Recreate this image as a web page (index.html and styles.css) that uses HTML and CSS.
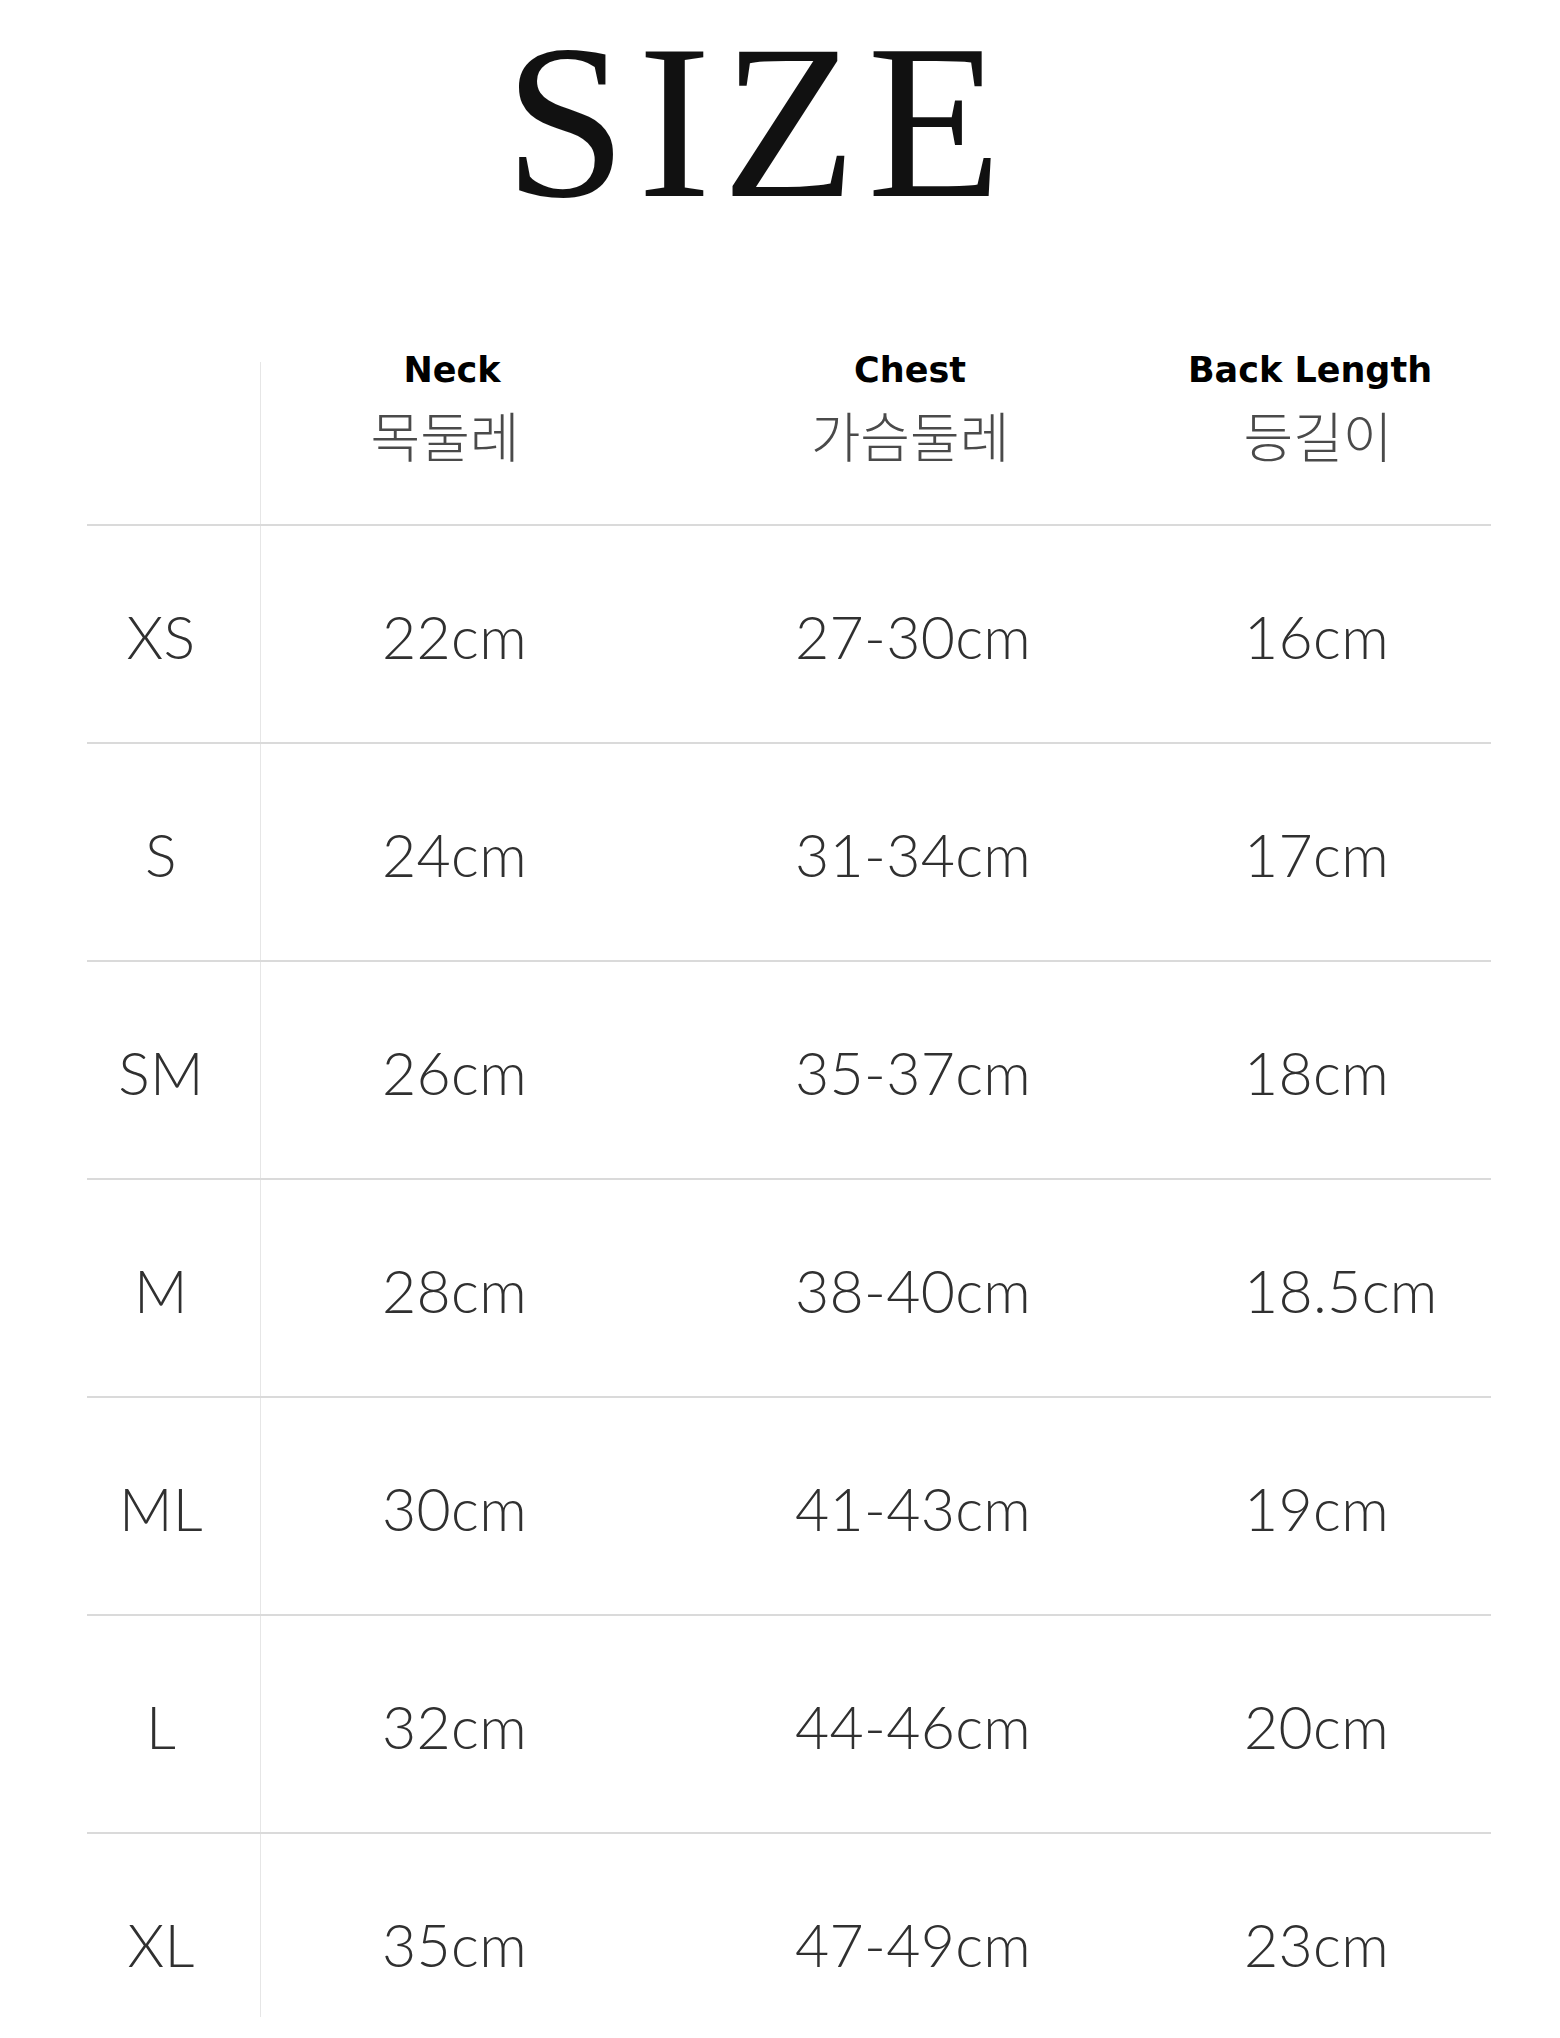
FILE: index.html
```html
<!DOCTYPE html>
<html lang="ko">
<head>
<meta charset="utf-8">
<title>SIZE</title>
<link rel="stylesheet" href="styles.css">
</head>
<body>
<div class="page">
  <h1 class="title">SIZE</h1>
  <div class="chart">
    <div class="row head">
      <div class="cell label"></div>
      <div class="cell"><span class="en">Neck</span><span class="ko ko-neck">목둘레</span></div>
      <div class="cell"><span class="en">Chest</span><span class="ko">가슴둘레</span></div>
      <div class="cell last"><span class="en">Back Length</span><span class="ko ko-back">등길이</span></div>
    </div>
    <div class="row">
      <div class="cell label">XS</div><div class="cell neck">22cm</div><div class="cell chest">27-30cm</div><div class="cell back">16cm</div>
    </div>
    <div class="row">
      <div class="cell label">S</div><div class="cell neck">24cm</div><div class="cell chest">31-34cm</div><div class="cell back">17cm</div>
    </div>
    <div class="row">
      <div class="cell label">SM</div><div class="cell neck">26cm</div><div class="cell chest">35-37cm</div><div class="cell back">18cm</div>
    </div>
    <div class="row">
      <div class="cell label">M</div><div class="cell neck">28cm</div><div class="cell chest">38-40cm</div><div class="cell back">18.5cm</div>
    </div>
    <div class="row">
      <div class="cell label">ML</div><div class="cell neck">30cm</div><div class="cell chest">41-43cm</div><div class="cell back">19cm</div>
    </div>
    <div class="row">
      <div class="cell label">L</div><div class="cell neck">32cm</div><div class="cell chest">44-46cm</div><div class="cell back">20cm</div>
    </div>
    <div class="row final">
      <div class="cell label">XL</div><div class="cell neck">35cm</div><div class="cell chest">47-49cm</div><div class="cell back">23cm</div>
    </div>
  </div>
</div>
</body>
</html>
```

FILE: styles.css
```css
html, body {
  margin: 0;
  padding: 0;
  background: #ffffff;
}

.page {
  width: 1560px;
  height: 2038px;
  overflow: hidden;
}

.title {
  margin: 0;
  padding-right: 43px;
  font-family: "Liberation Serif", "Times New Roman", serif;
  font-weight: 400;
  font-size: 220px;
  line-height: 244px;
  letter-spacing: 11px;
  text-align: center;
  color: #111111;
}

.chart {
  margin: 101px 69px 0 87px;
}

.row {
  display: grid;
  grid-template-columns: 174px 382px 534px 314px;
  height: 218px;
  box-sizing: border-box;
  border-top: 2px solid #dadada;
}

.cell {
  display: flex;
  align-items: center;
  justify-content: center;
  padding-top: 4px;
  font-family: Lato, "Noto Sans", sans-serif;
  font-weight: 300;
  font-size: 59px;
  letter-spacing: 0.3px;
  color: #303030;
}

.cell.label {
  padding-right: 26px;
  background: linear-gradient(#e6e6e6, #e6e6e6) right top / 1px 100% no-repeat;
}

.cell.neck {
  justify-content: flex-start;
  padding-left: 121px;
}

.cell.chest {
  justify-content: flex-start;
  padding-left: 152px;
}

.cell.back {
  justify-content: flex-start;
  padding-left: 67px;
}

.cell.last {
  padding-right: 48px;
}

.row.final .cell.label {
  background-size: 1px 183px;
}

.row.head {
  height: 179px;
  border-top: none;
}

.row.head .cell {
  flex-direction: column;
  justify-content: flex-start;
  padding-top: 5px;
}

.row.head .cell.label {
  margin-top: 17px;
  padding-top: 0;
}

.en {
  font-family: "DejaVu Sans", "Liberation Sans", sans-serif;
  font-weight: 700;
  font-size: 35px;
  line-height: 40px;
  letter-spacing: 0;
  color: #000000;
}

.ko {
  margin-top: 18px;
  font-family: "Noto Sans CJK KR", "Noto Sans", sans-serif;
  font-weight: 300;
  font-size: 54px;
  line-height: 54px;
  letter-spacing: 0;
  color: #4a4a4a;
}

.ko-neck {
  margin-right: 14px;
}

.ko-back {
  margin-left: 16px;
}
```
